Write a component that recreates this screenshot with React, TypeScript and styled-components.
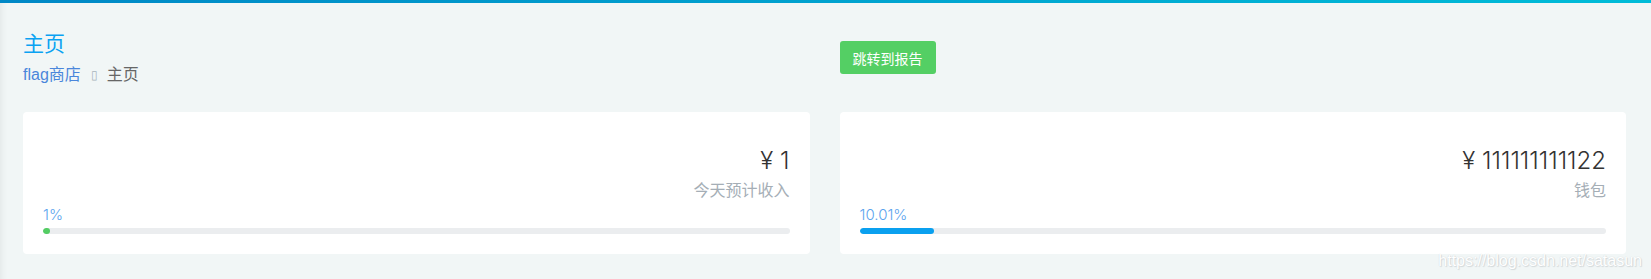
import styled, { createGlobalStyle } from "styled-components";

const GlobalStyle = createGlobalStyle`
	html, body {
		margin: 0;
		padding: 0;
		background: #f1f6f6;
	}
	body {
		font-family: "Liberation Sans", "Noto Sans CJK SC", sans-serif;
	}
`;

interface BarProps {
	color: string;
}

const stats = [
	{ value: "¥ 1", label: "今天预计收入", percent: 1, text: "1%", color: "#53cd63" },
	{ value: "¥ 111111111122", label: "钱包", percent: 10.01, text: "10.01%", color: "#0aa0ef" },
];

function App() {
	return (
		<>
			<GlobalStyle />
			<Page>
				<TopLine />
				<Content>
					<Header>
						<TitleBlock>
							<Title>主页</Title>
							<Breadcrumb>
								<Crumb>flag商店</Crumb>
								<Separator>▯</Separator>
								<Current>主页</Current>
							</Breadcrumb>
						</TitleBlock>
						<ReportButton>跳转到报告</ReportButton>
					</Header>
					<Cards>
						{stats.map((s) => (
							<Card key={s.label}>
								<Value>{s.value}</Value>
								<Label>{s.label}</Label>
								<Percent>{s.text}</Percent>
								<Track>
									<Fill color={s.color} style={{ width: `${s.percent}%` }} />
								</Track>
							</Card>
						))}
					</Cards>
				</Content>
				<Watermark>https://blog.csdn.net/satasun</Watermark>
			</Page>
		</>
	);
}

export default App;

const Page = styled.div`
	position: relative;
	height: 279px;
	background: #f1f6f6;
	box-shadow: inset 8px 0 6px -6px rgba(0, 0, 0, 0.06);
	overflow: hidden;
`;

const TopLine = styled.div`
	height: 3px;
	background: linear-gradient(to right, #0088c6, #00bcd8);
`;

const Content = styled.div`
	padding: 0 25px 0 23px;
`;

const Header = styled.div`
	display: grid;
	grid-template-columns: 1fr 1fr;
	column-gap: 30px;
	align-items: center;
	height: 109px;
`;

const TitleBlock = styled.div`
	display: flex;
	flex-direction: column;
`;

const Title = styled.h1`
	margin: 0;
	font-size: 21px;
	font-weight: normal;
	line-height: 28px;
	color: #0aa2f2;
`;

const Breadcrumb = styled.div`
	display: flex;
	align-items: center;
	margin-top: 7px;
	font-size: 16px;
	line-height: 20px;
`;

const Crumb = styled.span`
	color: #4a86db;
`;

const Separator = styled.span`
	margin: 0 9px 0 10px;
	color: #a8b4bc;
	font-size: 12px;
`;

const Current = styled.span`
	color: #666;
`;

const ReportButton = styled.button`
	justify-self: start;
	width: 96px;
	height: 33px;
	padding: 0;
	border: none;
	border-radius: 3px;
	background: #54cf64;
	color: #fff;
	font-family: inherit;
	font-size: 14px;
	cursor: pointer;
`;

const Cards = styled.div`
	display: grid;
	grid-template-columns: 1fr 1fr;
	column-gap: 30px;
`;

const Card = styled.div`
	display: flex;
	flex-direction: column;
	height: 142px;
	box-sizing: border-box;
	padding: 31px 20px 20px 20px;
	background: #fff;
	border-radius: 4px;
`;

const Value = styled.div`
	text-align: right;
	font-family: Inter, "Liberation Sans", sans-serif;
	font-weight: 300;
	font-size: 24px;
	line-height: 36px;
	color: #333;
	font-variant-numeric: proportional-nums;
`;

const Label = styled.div`
	text-align: right;
	font-size: 16px;
	line-height: 24px;
	color: #a5aeb6;
`;

const Percent = styled.div`
	margin-top: 2px;
	font-family: Inter, "Liberation Sans", sans-serif;
	font-weight: 300;
	font-size: 15px;
	line-height: 20px;
	color: #5ba4ee;
	font-variant-numeric: proportional-nums;
`;

const Track = styled.div`
	height: 6px;
	margin-top: 3px;
	border-radius: 3px;
	background: #ebedef;
	overflow: hidden;
`;

const Fill = styled.div<BarProps>`
	height: 100%;
	min-width: 6px;
	border-radius: 3px;
	background: ${({ color }) => color};
`;

const Watermark = styled.div`
	position: absolute;
	right: 9px;
	bottom: 9px;
	font-size: 16px;
	color: #fff;
	text-shadow: 0 0 1px #c9cfd2, 1px 1px 1px #d4d9db;
`;
